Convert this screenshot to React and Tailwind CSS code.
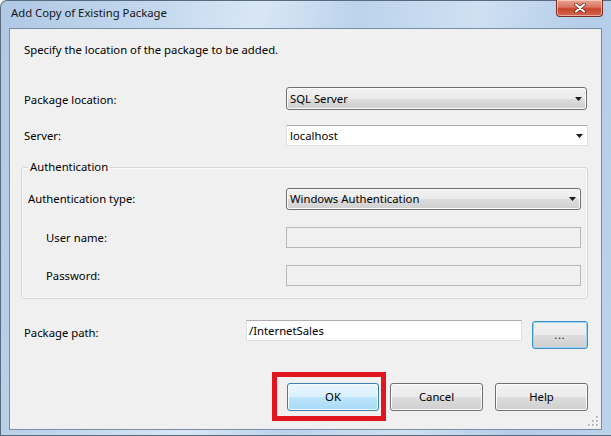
import React from "react";

function Arrow() {
  return (
    <svg width="7" height="4" viewBox="0 0 7 4" className="shrink-0">
      <path d="M0 0h7L3.5 4z" fill="#1a1a1a" />
    </svg>
  );
}

function DropList({ value, className = "" }) {
  return (
    <div
      className={
        "flex h-full items-center justify-between rounded-[3px] border border-[#707070] bg-[linear-gradient(#f2f2f2,#ebebeb_50%,#dddddd_50%,#cfcfcf)] pl-[3px] pr-[4px] shadow-[inset_0_0_0_1px_#fcfcfc] " +
        className
      }
    >
      <span>{value}</span>
      <Arrow />
    </div>
  );
}

const looks = {
  plain:
    "border-[#707070] bg-[linear-gradient(#f2f2f2,#ebebeb_50%,#dddddd_50%,#cfcfcf)] shadow-[inset_0_0_0_1px_#fcfcfc]",
  focus:
    "border-[#3c8fc8] bg-[linear-gradient(#f2f2f2,#ebebeb_50%,#dddddd_50%,#cfcfcf)] shadow-[inset_0_0_0_1px_#9fd5f4]",
  hot:
    "border-[#3c7fb1] bg-[linear-gradient(#eaf6fd,#d9f0fc_50%,#bee6fd_50%,#a7d9f5)] shadow-[inset_0_0_0_1px_#f4fbff]",
};

function Button({ children, look = "plain", className = "" }) {
  return (
    <div
      className={
        "flex h-[28px] items-center justify-center rounded-[3px] border " + looks[look] + " " + className
      }
    >
      {children}
    </div>
  );
}

export default function App() {
  return (
    <div className="h-[436px] w-[611px] overflow-hidden bg-white font-['Noto_Sans','Open_Sans',sans-serif] text-[11.3px] leading-[16px] text-[#000]">
      <div className="flex h-full w-full flex-col rounded-tl-[7px] border-t border-b border-l border-[#5b6b7e] bg-[linear-gradient(100deg,#afc8e4_0%,#c3d8ee_22%,#d9e7f5_38%,#bcd3ec_52%,#cfe0f2_70%,#b4cde8_86%,#bcd3ec_100%)] pb-[5px]">
        {/* title bar */}
        <div className="flex h-[27px] shrink-0 items-start justify-between pl-[10px] pr-[8px]">
          <span className="pt-[4px] text-[#141414]">Add Copy of Existing Package</span>
          <div className="-mt-[1px] flex h-[17px] w-[47px] items-center justify-center rounded-b-[4px] border border-t-0 border-[#7a2e22] bg-[linear-gradient(#e9a596,#d8725d_45%,#c7442c_55%,#d3664f)] shadow-[inset_0_0_0_1px_rgba(255,220,210,0.6)]">
            <svg width="12" height="10" viewBox="0 0 12 10">
              <path d="M2 1.5l8 7M10 1.5l-8 7" stroke="#5a1a10" strokeWidth="3.6" strokeLinecap="round" />
              <path d="M2 1.5l8 7M10 1.5l-8 7" stroke="#fff" strokeWidth="2.2" strokeLinecap="round" />
            </svg>
          </div>
        </div>

        {/* client area */}
        <div className="relative ml-[8px] mr-[9px] flex-1 border border-[#7a8da6] bg-[#f0f0f0]">
          <div className="flex flex-col pl-[14px] pr-[13px] pt-[13px]">
            <div className="h-[16px]">Specify the location of the package to be added.</div>

            <div className="mt-[29px] flex h-[23px] items-center">
              <span className="w-[262px] pt-[3px]">Package location:</span>
              <DropList value="SQL Server" className="mr-[1px] flex-1" />
            </div>

            <div className="mt-[15px] flex h-[21px] items-center">
              <span className="w-[262px]">Server:</span>
              <div className="flex h-full flex-1 items-center justify-between border border-[#dde0e6] border-t-[#abadb3] bg-white pl-[3px] pr-[4px]">
                <span>localhost</span>
                <Arrow />
              </div>
            </div>

            <fieldset className="-ml-[3px] mt-[13px] rounded-[3px] border border-[#d0d9e0] px-[6px] pb-[12px] shadow-[inset_0_0_0_1px_#fbfbfb]">
              <legend className="px-[2px]">Authentication</legend>
              <div className="mt-[13px] flex h-[22px] items-center">
                <span className="w-[258px]">Authentication type:</span>
                <DropList value="Windows Authentication" className="flex-1" />
              </div>
              <div className="mt-[17px] flex h-[21px] items-center">
                <span className="w-[258px] pl-[18px]">User name:</span>
                <div className="h-full flex-1 border border-[#b5b8bd] bg-[#f0f0f0]" />
              </div>
              <div className="mt-[17px] flex h-[21px] items-center">
                <span className="w-[258px] pl-[18px]">Password:</span>
                <div className="h-full flex-1 border border-[#b5b8bd] bg-[#f0f0f0]" />
              </div>
            </fieldset>

            <div className="mt-[21px] flex items-start">
              <span className="mt-[5px] w-[222px]">Package path:</span>
              <div className="flex h-[21px] w-[276px] items-center border border-[#dde0e6] border-t-[#abadb3] bg-white pl-[2px]">
                /InternetSales
              </div>
              <Button look="focus" className="ml-[10px] mt-[1px] flex-1 text-[10px] tracking-[1px]">
                ...
              </Button>
            </div>

            <div className="mt-[34px] flex justify-end">
              <div className="relative w-[92px]">
                <Button look="hot">OK</Button>
                <span className="pointer-events-none absolute -bottom-[10px] -left-[15px] -right-[7px] -top-[11px] border-[5px] border-[#e2141d]" />
              </div>
              <Button className="ml-[11px] w-[93px]">Cancel</Button>
              <Button className="ml-[12px] w-[93px]">Help</Button>
            </div>
          </div>

          {/* size grip */}
          <svg className="absolute bottom-[2px] right-[2px]" width="11" height="11" viewBox="0 0 11 11">
            {[
              [8, 0],
              [8, 4],
              [4, 4],
              [8, 8],
              [4, 8],
              [0, 8],
            ].map(([x, y]) => (
              <g key={x + "-" + y}>
                <rect x={x + 1} y={y + 1} width="2" height="2" fill="#fff" />
                <rect x={x} y={y} width="2" height="2" fill="#b8bcc2" />
              </g>
            ))}
          </svg>
        </div>
      </div>
    </div>
  );
}
